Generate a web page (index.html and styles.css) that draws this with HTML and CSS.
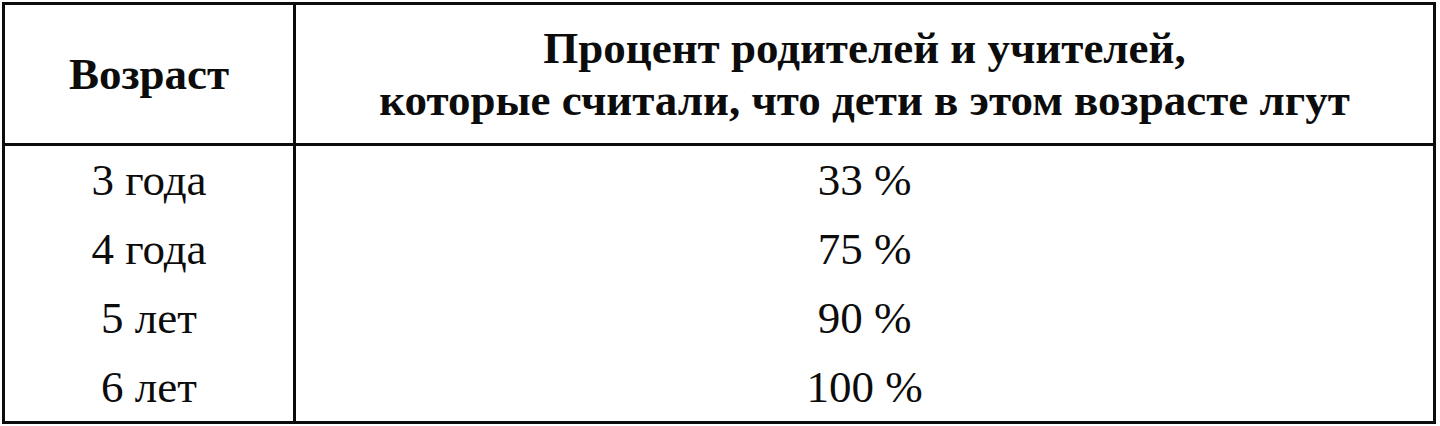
FILE: index.html
```html
<!DOCTYPE html>
<html lang="ru">
<head>
<meta charset="utf-8">
<title>Возраст</title>
<link rel="stylesheet" href="styles.css">
</head>
<body>
<table class="lie-table">
  <thead>
    <tr>
      <th class="col-age">Возраст</th>
      <th class="col-pct">Процент родителей и учителей,<br>которые считали, что дети в этом возрасте лгут</th>
    </tr>
  </thead>
  <tbody>
    <tr><td class="col-age">3 года</td><td class="col-pct">33 %</td></tr>
    <tr><td class="col-age">4 года</td><td class="col-pct">75 %</td></tr>
    <tr><td class="col-age">5 лет</td><td class="col-pct">90 %</td></tr>
    <tr class="last-row"><td class="col-age">6 лет</td><td class="col-pct">100 %</td></tr>
  </tbody>
</table>
</body>
</html>
```
FILE: styles.css
```css
html, body {
  margin: 0;
  padding: 0;
  background: #ffffff;
}
body {
  padding: 2px 0 0 2px;
  font-family: "Liberation Serif", "DejaVu Serif", serif;
  color: #0c0c0c;
}
.lie-table {
  width: 1434px;
  border-collapse: separate;
  border-spacing: 0;
  border: 3px solid #0c0c0c;
  table-layout: fixed;
}
.lie-table th,
.lie-table td {
  text-align: center;
  vertical-align: middle;
  padding: 0;
}
.lie-table th {
  font-weight: bold;
  font-size: 45px;
  line-height: 52px;
  padding: 17px 0;
  border-bottom: 3px solid #0c0c0c;
}
.lie-table td {
  font-size: 45px;
  line-height: 69px;
}
.lie-table .last-row td {
  line-height: 68px;
}
.col-age {
  width: 288px;
  border-right: 3px solid #0c0c0c;
}
```
